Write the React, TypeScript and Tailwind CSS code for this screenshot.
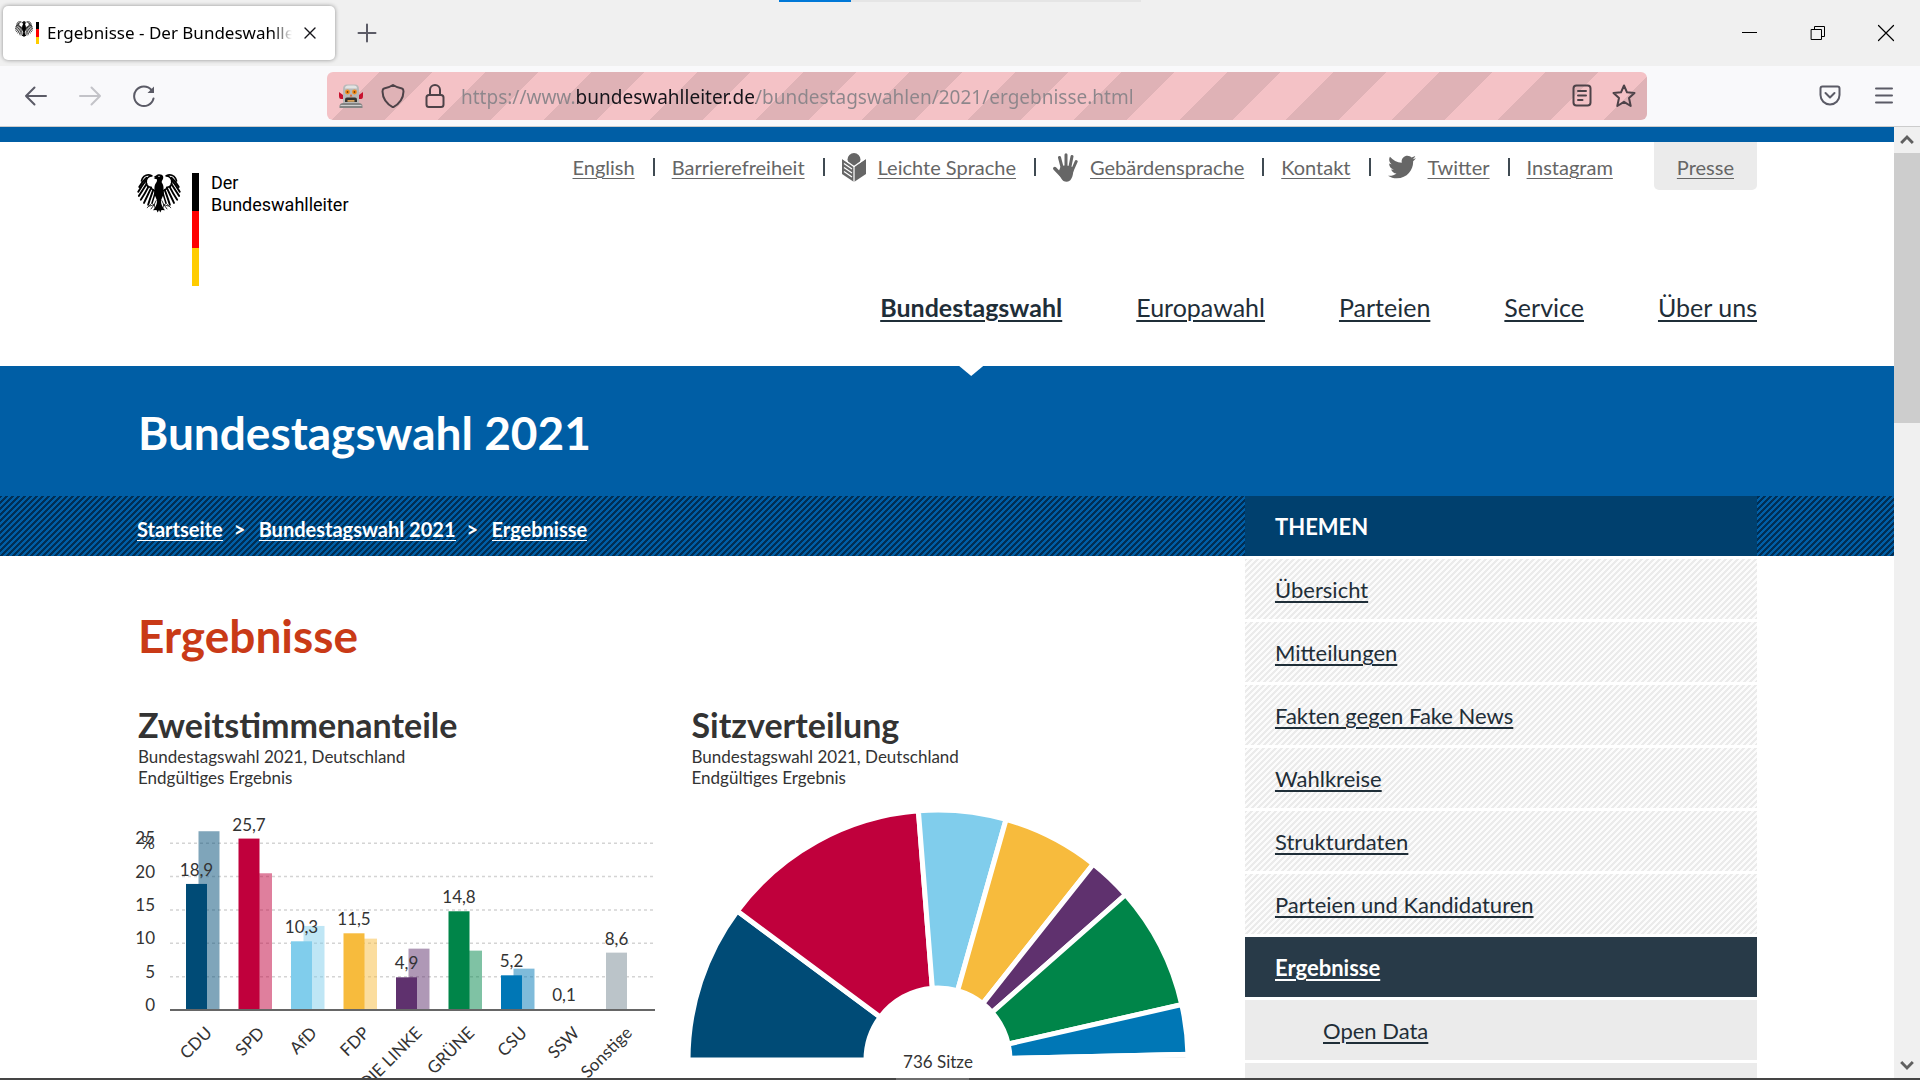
import type { ReactNode } from 'react';
import { FaTwitter } from 'react-icons/fa';

function EagleWing() {
  return (
    <g fill="none" stroke="#000" strokeLinecap="round">
      <path d="M68 66 C58 66 52 60 50 54 C44 54 36 50 35 40 C34 28 42 20 52 18" strokeWidth="5" />
      <path d="M52 18 C46 15 36 14 28 20 C24 24 21 29 20 34" strokeWidth="5" />
      <path d="M36 24 C26 32 18 44 13 53" strokeWidth="6" />
      <path d="M33 34 C25 44 17 56 10 68" strokeWidth="6" />
      <path d="M36 44 C29 55 21 68 12 81" strokeWidth="6" />
      <path d="M42 52 C36 64 28 78 18 93" strokeWidth="6" />
      <path d="M50 57 C44 70 36 86 28 103" strokeWidth="6" />
      <path d="M57 62 C52 76 46 92 41 109" strokeWidth="6" />
      <path d="M64 66 C61 78 57 92 53 104" strokeWidth="5" />
      <path d="M66 96 L60 108 L46 113 M60 108 L50 122 M60 108 L64 124 M49 108 L38 118" strokeWidth="2.5" />
    </g>
  );
}

function Eagle({ className }: { className: string }) {
  return (
    <svg viewBox="6 10 138 124" className={className} role="img" aria-label="Bundesadler">
      <EagleWing />
      <g transform="translate(150 0) scale(-1 1)">
        <EagleWing />
      </g>
      <path d="M58 22 L67 16 C72 11 86 12 88 20 C90 30 82 32 84 40 C92 50 88 62 90 72 C88 84 82 90 81 98 C82 108 86 118 94 126 L83 125 L79 133 L75 125 L71 133 L67 125 L56 126 C64 118 68 108 69 98 C68 90 62 84 60 72 C62 62 58 50 66 40 C70 34 69 30 67 28 L58 28 L64 25 Z" fill="#000" />
      <circle cx="75" cy="20" r="2" fill="#fff" />
    </svg>
  );
}

function Line({ className, children }: { className: string; children: ReactNode }) {
  return (
    <svg viewBox="0 0 24 24" className={className} fill="none" stroke="currentColor" strokeWidth="2" strokeLinecap="round" strokeLinejoin="round" aria-hidden="true">
      {children}
    </svg>
  );
}

function RobotIcon() {
  return (
    <svg viewBox="0 0 24 24" className="size-6" aria-hidden="true">
      <path d="M0 8 L4 11 V15 H2 Q0 15 0 12 Z" fill="#c8102e" />
      <path d="M24 8 L20 11 V15 H22 Q24 15 24 12 Z" fill="#c8102e" />
      <path d="M0.500 24 V22 Q1 19 4 19 H20 Q23 19 23.500 22 V24 Z" fill="#858585" />
      <path d="M4 5 Q4 0.500 8 0.500 H16 Q20 0.500 20 5 V19 H4 Z" fill="#b9b9b9" />
      <path d="M6 4.500 Q6 1.500 9 1.500 H15 Q18 1.500 18 4.500 Z" fill="#e3e3e3" />
      <circle cx="8.500" cy="8" r="2.400" fill="#f28c1c" />
      <circle cx="15.500" cy="8" r="2.400" fill="#f28c1c" />
      <circle cx="8.500" cy="8" r="0.900" fill="#7a3b00" />
      <circle cx="15.500" cy="8" r="0.900" fill="#7a3b00" />
      <path d="M12 10 L13.300 12.500 H10.700 Z" fill="#e05a20" />
      <path d="M6 18 V15.500 Q6 13.500 8 13.500 H16 Q18 13.500 18 15.500 V18 Z" fill="#35332f" />
      <path d="M8.500 17.800 H15.500 V16 H8.500 Z" fill="#d9a35e" />
      <path d="M1.500 21.500 H22.500" stroke="#d0d0d0" />
    </svg>
  );
}

function ReaderIcon() {
  return (
    <svg viewBox="0 0 24 29" className="h-[29px] w-6" aria-hidden="true">
      <circle cx="12" cy="6.500" r="6.500" fill="#666" />
      <path d="M0 6 L12 14 L24 6 V21 L12 29 L0 21 Z" fill="#666" />
      <path d="M0 5 L12 13.500 L24 5 M12 13 V29" stroke="#fff" strokeWidth="1.200" fill="none" />
      <path d="M2 10.500 L10 16 M2 14.500 L10 20 M2 18.500 L10 24" stroke="#fff" strokeWidth="1.200" />
    </svg>
  );
}

function HandIcon() {
  return (
    <svg viewBox="0 0 25 29" className="h-[29px] w-[25px]" fill="none" stroke="#666" strokeLinecap="round" aria-hidden="true">
      <path d="M9.500 16 L6.500 4.500 M13 15 L13 1.800 M16.500 16 L19 3.500 M19 18 L23.200 8.500" strokeWidth="3" />
      <path d="M8 22 L1.800 15.500" strokeWidth="3.400" />
      <path d="M7.500 14 C11 12 16 12 20.500 15 C20.500 20 19.500 28.500 14 28.800 C8.500 29 8 24 5 20 Z" fill="#666" stroke="none" />
    </svg>
  );
}

const metaLinks: { label: string; icon?: ReactNode }[] = [
  { label: 'English' },
  { label: 'Barrierefreiheit' },
  { label: 'Leichte Sprache', icon: <ReaderIcon /> },
  { label: 'Gebärdensprache', icon: <HandIcon /> },
  { label: 'Kontakt' },
  { label: 'Twitter', icon: <FaTwitter className="size-7 text-[#666]" aria-hidden="true" /> },
  { label: 'Instagram' },
];

const topics = ['Übersicht', 'Mitteilungen', 'Fakten gegen Fake News', 'Wahlkreise', 'Strukturdaten', 'Parteien und Kandidaturen'];

const votes = [
  { name: 'CDU', now: 18.9, before: 26.8, color: '#004b76' },
  { name: 'SPD', now: 25.7, before: 20.5, color: '#c0003c' },
  { name: 'AfD', now: 10.3, before: 12.6, color: '#80cdec' },
  { name: 'FDP', now: 11.5, before: 10.7, color: '#f7bb3d' },
  { name: 'DIE LINKE', now: 4.9, before: 9.2, color: '#5f316e' },
  { name: 'GRÜNE', now: 14.8, before: 8.9, color: '#008549' },
  { name: 'CSU', now: 5.2, before: 6.2, color: '#0077b6' },
  { name: 'SSW', now: 0.1, before: 0, color: '#e5e5e5' },
  { name: 'Sonstige', now: 8.6, before: 0, color: '#bbc4c9' },
];

const seats = [
  { name: 'CDU', until: 36.6, color: '#004b76' },
  { name: 'SPD', until: 85.5, color: '#c0003c' },
  { name: 'AfD', until: 105.8, color: '#80cdec' },
  { name: 'FDP', until: 128.4, color: '#f7bb3d' },
  { name: 'DIE LINKE', until: 138.6, color: '#5f316e' },
  { name: 'GRÜNE', until: 167.2, color: '#008549' },
  { name: 'CSU', until: 178.7, color: '#0077b6' },
  { name: 'SSW', until: 180, color: '#e5e5e5' },
];

function VoteChart() {
  const base = 222;
  const unit = 6.67;
  return (
    <svg viewBox="0 0 520 300" className="h-[300px] w-[520px] overflow-visible text-[17px]" fill="#333" role="img" aria-label="Zweitstimmenanteile in Prozent">
      {[5, 10, 15, 20, 25].map((v) => (
        <path key={v} d={`M32 ${base - v * unit} H517`} stroke="#d4d4d4" strokeWidth="1.500" strokeDasharray="3 3" />
      ))}
      {[0, 5, 10, 15, 20, 25].map((v) => (
        <text key={v} x="17" y={base - v * unit + 1} textAnchor="end">{v}</text>
      ))}
      <text x="17" y="61" textAnchor="end">%</text>
      {votes.map((p, i) => {
        const x = 48 + i * 52.5;
        return (
          <g key={p.name}>
            <rect x={x + 12.500} y={base - p.before * unit} width="21" height={p.before * unit} fill={p.color} opacity="0.5" />
            <rect x={x} y={base - p.now * unit} width="21" height={p.now * unit} fill={p.color} />
            <text x={x + 10.500} y={base - p.now * unit - 8} textAnchor="middle">{p.now.toFixed(1).replace('.', ',')}</text>
            <text transform={`translate(${x + 27} 246) rotate(-45)`} textAnchor="end">{p.name}</text>
          </g>
        );
      })}
      <path d="M32 222 H517" stroke="#666" strokeWidth="2" />
    </svg>
  );
}

function SeatChart() {
  const cx = 246;
  const cy = 272;
  const outer = 250;
  const inner = 72;
  const at = (r: number, deg: number) => {
    const a = (deg / 180) * Math.PI;
    return `${cx - r * Math.cos(a)} ${cy - r * Math.sin(a)}`;
  };
  return (
    <svg viewBox="0 0 498 300" className="h-[300px] w-[498px] overflow-visible text-[17px]" role="img" aria-label="Sitzverteilung">
      {seats.map((s, i) => {
        const from = i === 0 ? 0 : seats[i - 1].until;
        return (
          <path
            key={s.name}
            d={`M${at(outer, from)} A${outer} ${outer} 0 0 1 ${at(outer, s.until)} L${at(inner, s.until)} A${inner} ${inner} 0 0 0 ${at(inner, from)} Z`}
            fill={s.color}
            stroke="#fff"
            strokeWidth="5"
          />
        );
      })}
      <text x={cx} y="280" textAnchor="middle" fill="#333">736 Sitze</text>
    </svg>
  );
}

function ChartBlock({ title, children }: { title: string; children: ReactNode }) {
  return (
    <section>
      <h2 className="text-[34px] leading-[42px] font-bold text-[#333]">{title}</h2>
      <p className="text-[17px] leading-[21px] text-[#333]">
        Bundestagswahl 2021, Deutschland
        <br />
        Endgültiges Ergebnis
      </p>
      {children}
    </section>
  );
}

function BrowserChrome() {
  return (
    <header className="font-['Noto_Sans','Open_Sans',sans-serif]">
      <div className="relative flex h-[66px] items-center bg-[#f0f0f0] pl-[3px]">
        <div className="absolute top-0 left-1/2 h-0.5 w-[362px] -translate-x-1/2 bg-[#e5e5e5]">
          <div className="h-full w-[72px] bg-[#0078d7]" />
        </div>
        <div className="flex h-[54px] w-[332px] items-center rounded-[5px] bg-white pl-3 shadow-[0_0_4px_rgba(0,0,0,0.4)]">
          <Eagle className="mb-2 h-5 w-[18px]" />
          <div className="ml-[3px] h-[22px] w-[3px] bg-[linear-gradient(#000_33%,#f00_33%_66%,#fc0_66%)]" />
          <span className="ml-2 w-[245px] overflow-hidden [mask-image:linear-gradient(90deg,#000_92%,transparent)] text-[17px] whitespace-nowrap text-black">
            Ergebnisse - Der Bundeswahlleiter
          </span>
          <button aria-label="Tab schließen" className="ml-1.5 text-[#15141a]">
            <Line className="size-6"><path d="M7 7 L17 17 M17 7 L7 17" strokeWidth="1.400" /></Line>
          </button>
        </div>
        <button aria-label="Neuer Tab" className="ml-5 text-[#5b5b66]">
          <Line className="size-6"><path d="M12 3.500 V20.500 M3.500 12 H20.500" /></Line>
        </button>
        <div className="ml-auto flex items-center gap-11 pr-[22px] text-black">
          <button aria-label="Minimieren">
            <Line className="size-6"><path d="M4 11.500 H19" strokeWidth="1" strokeLinecap="butt" /></Line>
          </button>
          <button aria-label="Verkleinern">
            <Line className="size-6"><path d="M5.500 8.500 H15.500 V18.500 H5.500 Z M8.500 8.500 V5.500 H18.500 V15.500 H15.500" strokeWidth="1" strokeLinejoin="miter" /></Line>
          </button>
          <button aria-label="Schließen">
            <Line className="size-6"><path d="M4.500 4.500 L19.500 19.500 M19.500 4.500 L4.500 19.500" strokeWidth="1.200" /></Line>
          </button>
        </div>
      </div>

      <div className="flex h-[61px] items-center border-b border-[#ccc] bg-[#f9f9fb] px-6 text-[#5b5b66]">
        <div className="flex w-[303px] shrink-0 gap-[30px]">
          <button aria-label="Zurück"><Line className="size-6"><path d="M22 12 H2 M10.500 3.500 L2 12 L10.500 20.500" /></Line></button>
          <button aria-label="Vorwärts" className="text-[#c3c3c8]"><Line className="size-6"><path d="M2 12 H22 M13.500 3.500 L22 12 L13.500 20.500" /></Line></button>
          <button aria-label="Neu laden">
            <Line className="size-6"><path d="M21.500 14.500 A9.800 9.800 0 1 1 19.500 6" /><path d="M22 2.500 V9 H15.500 Z" fill="currentColor" stroke="none" /></Line>
          </button>
        </div>
        <div className="flex h-12 w-[1320px] min-w-0 items-center rounded-[6px] bg-[linear-gradient(135deg,#f4c2c6_25%,#dfb2b6_25%_50%,#f4c2c6_50%_75%,#dfb2b6_75%)] bg-[length:106px_106px] pr-[11px] pl-3 text-[#4d4248]">
          <RobotIcon />
          <button aria-label="Schutz vor Aktivitätenverfolgung" className="ml-[18px]">
            <Line className="size-6"><path d="M12 1 C15 3 18 4 21 4.500 C22.500 5 22.500 6 22.500 7.500 C22.300 15 18 20 12 23.300 C6 20 1.700 15 1.500 7.500 C1.500 6 1.500 5 3 4.500 C6 4 9 3 12 1 Z" /></Line>
          </button>
          <button aria-label="Verbindung sicher" className="ml-[18px]">
            <Line className="size-6"><rect x="3.500" y="11" width="17" height="12" rx="2.500" /><path d="M7 11 V6 A5 5 0 0 1 17 6 V11" /></Line>
          </button>
          <input
            aria-label="Adresse"
            readOnly
            className="ml-[14px] h-10 min-w-0 flex-1 bg-[linear-gradient(90deg,#8d868b_115px,#15141a_115px_295px,#8d868b_295px)] bg-clip-text pt-0.5 text-[19px] text-transparent outline-none"
            value="https://www.bundeswahlleiter.de/bundestagswahlen/2021/ergebnisse.html"
          />
          <button aria-label="Leseansicht">
            <Line className="size-6"><rect x="3.500" y="1.500" width="17" height="20" rx="3" /><path d="M8 7 H16 M8 11.500 H16 M8 16 H12.500" /></Line>
          </button>
          <button aria-label="Lesezeichen" className="ml-[18px]">
            <Line className="size-6"><path d="M12 1.500 L15 8.300 L22.500 9 L17 14 L18.700 22 L12 17.800 L5.300 22 L7 14 L1.500 9 L9 8.300 Z" /></Line>
          </button>
        </div>
        <div className="ml-auto flex gap-[30px]">
          <button aria-label="Pocket"><Line className="size-6"><path d="M4.500 2.500 H19.500 Q21.500 2.500 21.500 4.500 V11 A9.500 9.500 0 0 1 2.500 11 V4.500 Q2.500 2.500 4.500 2.500 Z M7.500 9 L12 13.500 L16.500 9" /></Line></button>
          <button aria-label="Menü"><Line className="size-6"><path d="M4 4.500 H20 M4 11.500 H20 M4 18.500 H20" /></Line></button>
        </div>
      </div>
    </header>
  );
}

function SiteHeader() {
  return (
    <div className="border-t-[15px] border-[#005ea5] bg-white">
      <div className="mx-auto flex h-56 max-w-[1620px] justify-between">
        <a href="#start" className="flex items-start pt-[30px] text-black">
          <Eagle className="h-[42px] w-11" />
          <div className="mt-px ml-[11px] h-[113px] w-[7px] bg-[linear-gradient(#000_33.3%,#f00_33.3%_66.6%,#fc0_66.6%)]" />
          <span className="ml-3 font-['Roboto',sans-serif] text-[18px] leading-[22px]">
            Der
            <br />
            Bundeswahlleiter
          </span>
        </a>
        <div className="flex flex-col items-end justify-between">
          <nav aria-label="Servicenavigation" className="flex text-[20px] leading-6 text-[#666]">
            <ul className="flex h-12 items-center pt-0.5">
              {metaLinks.map((l, i) => (
                <li key={l.label} className="flex items-center">
                  {i > 0 && <span className="mr-[17px] ml-[18px] h-[18px] w-[2px] bg-[#3f4a52]" />}
                  {l.icon && <span className="mr-3">{l.icon}</span>}
                  <a href={'#' + l.label} className="underline decoration-1 underline-offset-3">{l.label}</a>
                </li>
              ))}
            </ul>
            <a href="#Presse" className="ml-[41px] flex h-12 items-center rounded-b-[5px] bg-[#ebebeb] px-[23px] pt-0.5 underline decoration-1 underline-offset-3">Presse</a>
          </nav>
          <nav aria-label="Hauptnavigation" className="flex gap-[74px] text-[25px] leading-8 text-[#1f2e38]">
            {['Bundestagswahl', 'Europawahl', 'Parteien', 'Service', 'Über uns'].map((label, i) => (
              <a key={label} href={'#' + label} className={i === 0 ? 'relative pb-[43px] font-bold underline decoration-2 underline-offset-3' : 'pb-[43px] underline decoration-2 underline-offset-3'}>
                {label}
                {i === 0 && <span className="absolute top-full left-1/2 h-2.5 w-6 -translate-x-1/2 bg-white [clip-path:polygon(0_0,100%_0,50%_100%)]" />}
              </a>
            ))}
          </nav>
        </div>
      </div>
    </div>
  );
}

function Crumb({ label, last }: { label: string; last?: boolean }) {
  return (
    <li className="flex">
      <a href={'#' + label} className="border-b border-white leading-[22px]">{label}</a>
      {!last && <span className="w-9 pl-[11px] leading-[22px]">&gt;</span>}
    </li>
  );
}

function Page() {
  return (
    <div className="min-w-0 flex-1 overflow-hidden bg-white font-['Lato','Noto_Sans',sans-serif]">
      <SiteHeader />
      <div className="bg-[#005ea5] text-white">
        <p className="mx-auto flex h-[130px] max-w-[1620px] items-center pt-1 pl-px text-[46px] leading-[56px] font-bold">Bundestagswahl 2021</p>
      </div>
      <div className="bg-[#005ea5] bg-[linear-gradient(135deg,#002e54_20%,transparent_20%_50%,#002e54_50%_70%,transparent_70%)] bg-[length:6px_6px] font-bold text-white">
        <div className="mx-auto flex max-w-[1620px]">
          <ol className="flex flex-1 items-center pt-1.5 text-[20px]">
            <Crumb label="Startseite" />
            <Crumb label="Bundestagswahl 2021" />
            <Crumb label="Ergebnisse" last />
          </ol>
          <h2 className="flex h-[60px] w-[512px] items-center bg-[#00406e] px-[30px] text-[22px]">THEMEN</h2>
        </div>
      </div>
      <div className="mx-auto flex max-w-[1620px]">
        <main className="flex-1 pt-[52px] pl-px">
          <h1 className="text-[46px] leading-[56px] font-bold text-[#c93a17]">Ergebnisse</h1>
          <div className="mt-10 grid grid-cols-2">
            <ChartBlock title="Zweitstimmenanteile"><VoteChart /></ChartBlock>
            <ChartBlock title="Sitzverteilung"><SeatChart /></ChartBlock>
          </div>
        </main>
        <aside className="w-[512px] pt-[3px] text-[22px] leading-[30px] text-[#1f2e38]">
          <ul className="flex flex-col gap-[3px]">
            {topics.map((t) => (
              <li key={t} className="flex h-[60px] items-center bg-[#fcfcfc] bg-[linear-gradient(135deg,#ebebeb_25%,transparent_25%_50%,#ebebeb_50%_75%,transparent_75%)] bg-[length:6px_6px] px-[30px] pt-0.5">
                <a href={'#' + t} className="underline decoration-2 underline-offset-3">{t}</a>
              </li>
            ))}
            <li className="flex h-[60px] items-center bg-[#283a48] px-[30px] pt-0.5 font-bold text-white">
              <a href="#Ergebnisse" className="underline decoration-2 underline-offset-3">Ergebnisse</a>
            </li>
            <li className="flex h-[60px] items-center bg-[#ebebeb] pt-0.5 pl-[78px]">
              <a href="#OpenData" className="underline decoration-2 underline-offset-3">Open Data</a>
            </li>
            <li className="h-[60px] bg-[#ebebeb]" />
          </ul>
        </aside>
      </div>
    </div>
  );
}

export default function App() {
  return (
    <div className="flex h-screen flex-col overflow-hidden bg-white">
      <BrowserChrome />
      <div className="flex min-h-0 flex-1">
        <Page />
        <div className="flex w-[26px] shrink-0 flex-col bg-[#f0f0f0] text-[#606060]">
          <button aria-label="Nach oben" className="flex h-[26px] items-center justify-center">
            <Line className="size-5"><path d="M5 15.500 L12 8.500 L19 15.500" strokeWidth="3.500" strokeLinecap="butt" strokeLinejoin="miter" /></Line>
          </button>
          <div className="h-[270px] bg-[#cdcdcd]" />
          <button aria-label="Nach unten" className="mt-auto flex h-[26px] items-center justify-center">
            <Line className="size-5"><path d="M5 8.500 L12 15.500 L19 8.500" strokeWidth="3.500" strokeLinecap="butt" strokeLinejoin="miter" /></Line>
          </button>
        </div>
      </div>
      <div className="flex h-0.5 shrink-0 justify-center bg-[#454545]">
        <div className="mr-14 w-[73px] bg-[#6e6e6e]" />
      </div>
    </div>
  );
}
